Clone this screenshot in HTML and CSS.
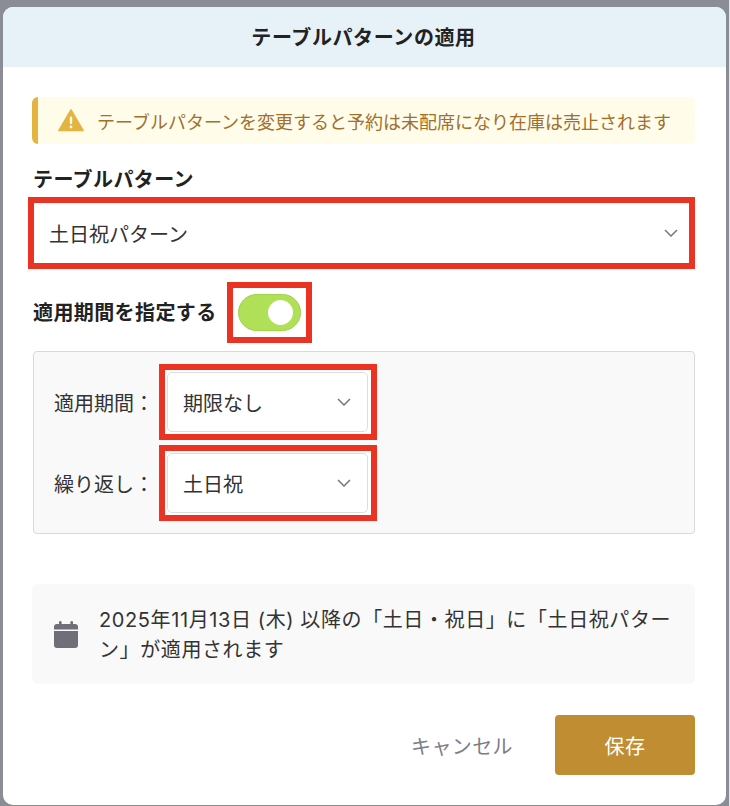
FILE: index.html
```html
<!DOCTYPE html>
<html lang="ja">
<head>
  <meta charset="UTF-8">
  <meta name="viewport" content="width=device-width, initial-scale=1.0">
  <title>テーブルパターンの適用</title>
  <link rel="stylesheet" href="styles.css">
</head>
<body>

  <div id="modal">
    <div class="modal-header">テーブルパターンの適用</div>

    <div class="modal-body">
      <div class="alert">
        <svg class="alert-icon" viewBox="0 0 26 23" width="26" height="23">
          <path d="M13 1 L25 21.5 H1 Z" fill="#e3b440" stroke="#e3b440" stroke-width="1.6" stroke-linejoin="round"/>
          <rect x="11.8" y="7.5" width="2.4" height="7.5" rx="1" fill="#fffdf0"/>
          <circle cx="13" cy="18" r="1.4" fill="#fffdf0"/>
        </svg>
        <span>テーブルパターンを変更すると予約は未配席になり在庫は売止されます</span>
      </div>

      <div class="field-label">テーブルパターン</div>
      <div class="select select-wide">
        <span>土日祝パターン</span>
        <svg class="chevron" viewBox="0 0 14 8" width="14" height="8"><path d="M1 1 L7 7 L13 1" fill="none" stroke="#777" stroke-width="1.5"/></svg>
      </div>

      <div class="toggle-row">
        <div class="field-label">適用期間を指定する</div>
        <div class="toggle-wrap">
          <div class="toggle"><div class="knob"></div></div>
        </div>
      </div>

      <div class="period-box">
        <div class="period-row">
          <label>適用期間：</label>
          <div class="select-wrap">
            <div class="select select-small">
              <span>期限なし</span>
              <svg class="chevron" viewBox="0 0 14 8" width="14" height="8"><path d="M1 1 L7 7 L13 1" fill="none" stroke="#777" stroke-width="1.5"/></svg>
            </div>
          </div>
        </div>
        <div class="period-row">
          <label>繰り返し：</label>
          <div class="select-wrap">
            <div class="select select-small">
              <span>土日祝</span>
              <svg class="chevron" viewBox="0 0 14 8" width="14" height="8"><path d="M1 1 L7 7 L13 1" fill="none" stroke="#777" stroke-width="1.5"/></svg>
            </div>
          </div>
        </div>
      </div>

      <div class="info">
        <svg class="info-icon" viewBox="0 0 24 27" width="24" height="27">
          <rect x="5" y="0" width="2.6" height="6" rx="1.3" fill="#706e79"/>
          <rect x="16.4" y="0" width="2.6" height="6" rx="1.3" fill="#706e79"/>
          <path d="M3 3 H21 A3 3 0 0 1 24 6 V8.5 H0 V6 A3 3 0 0 1 3 3 Z" fill="#706e79"/>
          <path d="M0 10 H24 V24 A3 3 0 0 1 21 27 H3 A3 3 0 0 1 0 24 Z" fill="#706e79"/>
        </svg>
        <p>2025年11月13日 (木) 以降の「土日・祝日」に「土日祝パターン」が適用されます</p>
      </div>

      <div class="actions">
        <button class="btn-cancel">キャンセル</button>
        <button class="btn-save">保存</button>
      </div>
    </div>
  </div>

</body>
</html>
```

FILE: styles.css
```css
html, body {
  height: 100%;
}

body {
  margin: 0;
  padding: 7px 0 0 0;
  box-sizing: border-box;
  background-color: #8a8c96;
  border-right: 1px solid #e6e6ea;
  font-family: Inter, 'Noto Sans CJK JP', sans-serif;
  font-size: 20px;
  color: #333;
  overflow: hidden;
}

#modal {
  width: 723px;
  height: 798px;
  margin-left: 3px;
  background-color: #fff;
  border-radius: 10px;
  overflow: hidden;
}

.modal-header {
  height: 60px;
  display: flex;
  justify-content: center;
  align-items: center;
  padding-bottom: 2px;
  padding-right: 2px;
  box-sizing: border-box;
  background-color: #e6f1f8;
  font-size: 20px;
  font-weight: 700;
  letter-spacing: 0.6px;
  color: #222;
}

.modal-body {
  padding: 30px 31px 0 29px;
}

.alert {
  height: 47px;
  display: flex;
  align-items: center;
  gap: 13px;
  padding-left: 20px;
  box-sizing: border-box;
  background-color: #fffcea;
  border-left: 6px solid #e3b440;
  border-radius: 6px;
  font-size: 18px;
  color: #a0702c;
}

.alert-icon {
  flex-shrink: 0;
}

.field-label {
  font-weight: 700;
  color: #222;
  line-height: 30px;
  letter-spacing: 0.4px;
}

.alert + .field-label {
  margin-top: 21px;
  margin-left: 1px;
}

.select {
  display: flex;
  justify-content: space-between;
  align-items: center;
  height: 60px;
  box-sizing: border-box;
  background-color: #fff;
  color: #333;
}

.select-wide {
  margin: 8px 6px 0 2px;
  padding: 0 11px 0 15px;
  outline: 6px solid #ea3323;
}

.select-wrap {
  padding: 2px 3px 2px 2px;
  background-color: #fff;
  border: 6px solid #ea3323;
}

.select-small {
  width: 201px;
  padding: 0 16px 0 15px;
  border: 1px solid #ddd;
  border-radius: 5px;
}

.toggle-row {
  display: flex;
  align-items: center;
  gap: 10px;
  margin-top: 19px;
  margin-left: 1px;
  height: 61px;
}

.toggle-wrap {
  padding: 6px 5px;
  border: 6px solid #ea3323;
}

.toggle {
  width: 63px;
  height: 37px;
  display: flex;
  justify-content: flex-end;
  align-items: center;
  padding-right: 7px;
  box-sizing: border-box;
  background-color: #b0e057;
  border: 1px solid #a0d24a;
  border-radius: 19px;
}

.knob {
  width: 25px;
  height: 25px;
  background-color: #fff;
  border-radius: 50%;
}

.period-box {
  margin-top: 8px;
  margin-left: 1px;
  padding: 12px 20px;
  display: flex;
  flex-direction: column;
  gap: 5px;
  box-sizing: border-box;
  height: 183px;
  background-color: #f9f9f9;
  border: 1px solid #d9d9d9;
  border-radius: 4px;
}

.period-row {
  display: flex;
  align-items: center;
}

.period-row label {
  width: 105px;
}

.info {
  margin-top: 50px;
  height: 100px;
  display: flex;
  align-items: center;
  gap: 21px;
  padding: 0 22px;
  box-sizing: border-box;
  background-color: #f9f9f9;
  border-radius: 6px;
}

.info-icon {
  flex-shrink: 0;
}

.info p {
  margin: 0;
  padding-top: 2px;
  line-height: 30px;
  letter-spacing: 0.6px;
  color: #333;
}

.actions {
  margin-top: 31px;
  display: flex;
  justify-content: flex-end;
  align-items: center;
  gap: 42px;
}

.actions button {
  font-family: inherit;
  font-size: 20px;
  letter-spacing: 0.4px;
  border: none;
  cursor: pointer;
}

.btn-cancel {
  padding: 0;
  background: none;
  color: #7d7d86;
}

.btn-save {
  width: 140px;
  height: 60px;
  background-color: #c18d33;
  color: #fff;
  border-radius: 4px;
}
```
